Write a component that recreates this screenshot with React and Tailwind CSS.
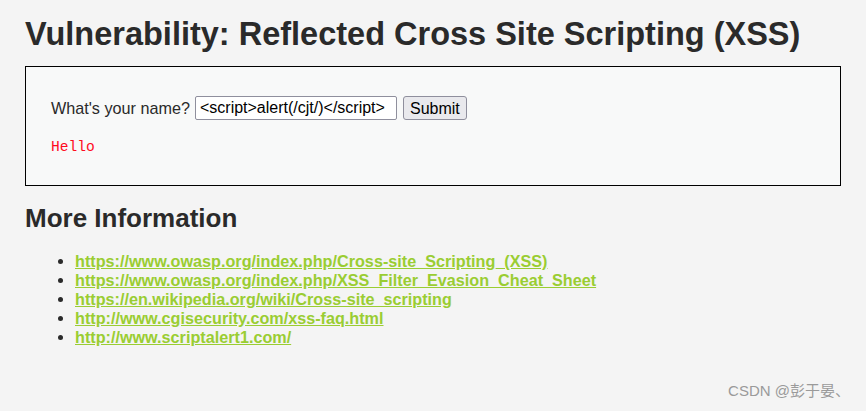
import React from "react";

const links = [
  "https://www.owasp.org/index.php/Cross-site_Scripting_(XSS)",
  "https://www.owasp.org/index.php/XSS_Filter_Evasion_Cheat_Sheet",
  "https://en.wikipedia.org/wiki/Cross-site_scripting",
  "http://www.cgisecurity.com/xss-faq.html",
  "http://www.scriptalert1.com/",
];

const App = () => {
  return (
    <div className="relative h-[411px] w-[866px] overflow-hidden bg-[#f4f4f4] px-[25px] pt-[16px] font-['Liberation_Sans',Arial,sans-serif] text-[#2a2a2a]">
      <h1 className="text-[32.5px] font-bold leading-[37px]">
        Vulnerability: Reflected Cross Site Scripting (XSS)
      </h1>

      {/* vulnerable code area */}
      <div className="mt-[13px] h-[120px] w-[816px] border border-black bg-[#f8f9f9] px-[25px] pt-[29px]">
        <form className="flex items-center text-[16.2px]" onSubmit={(e) => e.preventDefault()}>
          <span className="text-[#2a2a2a]">What's your name?</span>
          <input
            type="text"
            defaultValue="<script>alert(/cjt/)</script>"
            className="ml-[5px] h-[24px] w-[202px] rounded-[2px] border border-[#8f8f9d] bg-white px-[4px] text-[16px] text-black outline-none"
          />
          <button className="ml-[6px] h-[24px] rounded-[3px] border border-[#8f8f9d] bg-[#e9e9ed] px-[6px] text-[16px] text-black">
            Submit
          </button>
        </form>
        <pre className="mt-[19px] font-['Liberation_Mono','Courier_New',monospace] text-[14.6px] leading-[17px] text-[#ff0a1e]">
          Hello
        </pre>
      </div>

      <h2 className="mt-[17px] text-[26px] font-bold leading-[30px]">More Information</h2>

      <ul className="mt-[19px] list-disc pl-[50px] text-[16.2px] leading-[19px] marker:text-[#2a2a2a]">
        {links.map((href) => (
          <li key={href}>
            <a href={href} className="font-bold text-[#9acd32] underline">
              {href}
            </a>
          </li>
        ))}
      </ul>

      <div className="absolute right-[16px] top-[380px] font-['Liberation_Sans','Noto_Sans_CJK_SC',sans-serif] text-[15px] text-[#9a9a9a]">
        CSDN @彭于晏、
      </div>
    </div>
  );
};

export default App;
